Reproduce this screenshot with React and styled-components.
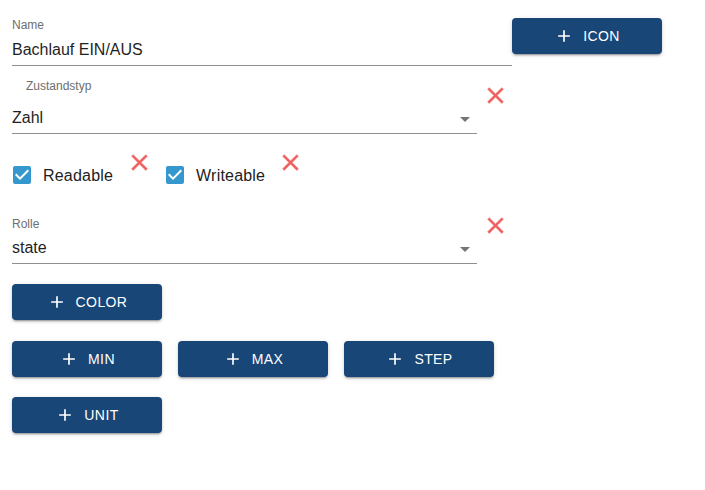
import React from "react";
import styled, { createGlobalStyle } from "styled-components";

const Global = createGlobalStyle`
  html, body { margin: 0; padding: 0; background: #fff; }
  body { font-family: "Liberation Sans", Arial, sans-serif; }
`;

const Page = styled.div`
  width: 705px;
  height: 490px;
  box-sizing: border-box;
  padding: 18px 0 0 12px;
  display: flex;
  flex-direction: column;
`;

const Row = styled.div`
  display: flex;
  align-items: flex-start;
  margin-top: ${(p) => p.$mt || 0}px;
`;

const Field = styled.div`
  width: ${(p) => p.$w}px;
  display: flex;
  flex-direction: column;
  position: relative;
`;

const Label = styled.div`
  font-size: 12px;
  line-height: 14px;
  color: #6e6e6e;
  margin-left: ${(p) => p.$indent || 0}px;
`;

const Value = styled.div`
  font-size: 16px;
  line-height: 19px;
  color: #1f1f1f;
  margin-top: ${(p) => p.$gap}px;
  padding-bottom: 6px;
  border-bottom: 1px solid #8f8f8f;
`;

const Arrow = styled.svg`
  position: absolute;
  right: 0;
  bottom: 3px;
  width: 24px;
  height: 24px;
  fill: #757575;
`;

const RemoveIcon = styled.svg`
  width: 27px;
  height: 27px;
  fill: #f05f5f;
  stroke: #f05f5f;
  stroke-width: 0.45;
  flex: none;
  margin-left: ${(p) => p.$ml || 0}px;
  margin-top: ${(p) => p.$mt || 0}px;
`;

const CheckLabel = styled.label`
  display: flex;
  align-items: center;
  height: 24px;
  margin-top: 14px;
  margin-left: ${(p) => p.$ml || 0}px;
  font-size: 16px;
  letter-spacing: 0.2px;
  line-height: 19px;
  color: #222;
`;

const CheckIcon = styled.svg`
  width: 24px;
  height: 24px;
  fill: #3497cd;
  margin-right: 9px;
`;

const ButtonGrid = styled.div`
  display: flex;
  flex-direction: column;
  gap: 20.5px;
  margin-top: 20px;
`;

const ButtonRow = styled.div`
  display: flex;
  gap: 16px;
`;

const AddButton = styled.button`
  width: 150px;
  height: 36px;
  flex: none;
  border: none;
  border-radius: 4px;
  background: #184677;
  color: #fff;
  font-family: "Liberation Sans", Arial, sans-serif;
  font-size: 14px;
  letter-spacing: 0.4px;
  text-transform: uppercase;
  display: flex;
  align-items: center;
  justify-content: center;
  padding: 0;
  box-shadow: 0 3px 1px -2px rgba(0,0,0,0.2), 0 2px 2px 0 rgba(0,0,0,0.14), 0 1px 5px 0 rgba(0,0,0,0.12);
  cursor: pointer;
`;

const PlusIcon = styled.svg`
  width: 20px;
  height: 20px;
  fill: #fff;
  margin-right: 9px;
`;

const Plus = () => (
  <PlusIcon viewBox="0 0 24 24">
    <path d="M19 13h-6v6h-2v-6H5v-2h6V5h2v6h6v2z" />
  </PlusIcon>
);

const Close = (props) => (
  <RemoveIcon viewBox="0 0 24 24" {...props}>
    <path d="M19 6.41L17.59 5 12 10.59 6.41 5 5 6.41 10.59 12 5 17.59 6.41 19 12 13.41 17.59 19 19 17.59 13.41 12z" />
  </RemoveIcon>
);

const Check = () => (
  <CheckIcon viewBox="0 0 24 24">
    <path d="M19 3H5c-1.11 0-2 .9-2 2v14c0 1.1.89 2 2 2h14c1.11 0 2-.9 2-2V5c0-1.1-.89-2-2-2zm-9 14l-5-5 1.41-1.41L10 14.17l7.59-7.59L19 8l-9 9z" />
  </CheckIcon>
);

const DropArrow = () => (
  <Arrow viewBox="0 0 24 24">
    <path d="M7 10l5 5 5-5z" />
  </Arrow>
);

const Btn = ({ children }) => (
  <AddButton>
    <Plus />
    {children}
  </AddButton>
);

export default function App() {
  return (
    <>
      <Global />
      <Page>
        <Row>
          <Field $w={500}>
            <Label>Name</Label>
            <Value $gap={8}>Bachlauf EIN/AUS</Value>
          </Field>
          <Btn>Icon</Btn>
        </Row>

        <Row $mt={13}>
          <Field $w={465}>
            <Label $indent={14}>Zustandstyp</Label>
            <Value $gap={15}>Zahl</Value>
            <DropArrow />
          </Field>
          <Close $ml={5} $mt={3} />
        </Row>

        <Row $mt={15}>
          <CheckLabel $ml={-2}>
            <Check />
            Readable
          </CheckLabel>
          <Close $ml={13} />
          <CheckLabel $ml={10}>
            <Check />
            Writeable
          </CheckLabel>
          <Close $ml={12} />
        </Row>

        <Row $mt={30}>
          <Field $w={465}>
            <Label>Rolle</Label>
            <Value $gap={7}>state</Value>
            <DropArrow />
          </Field>
          <Close $ml={5} $mt={-5} />
        </Row>

        <ButtonGrid>
          <ButtonRow>
            <Btn>Color</Btn>
          </ButtonRow>
          <ButtonRow>
            <Btn>Min</Btn>
            <Btn>Max</Btn>
            <Btn>Step</Btn>
          </ButtonRow>
          <ButtonRow>
            <Btn>Unit</Btn>
          </ButtonRow>
        </ButtonGrid>
      </Page>
    </>
  );
}
